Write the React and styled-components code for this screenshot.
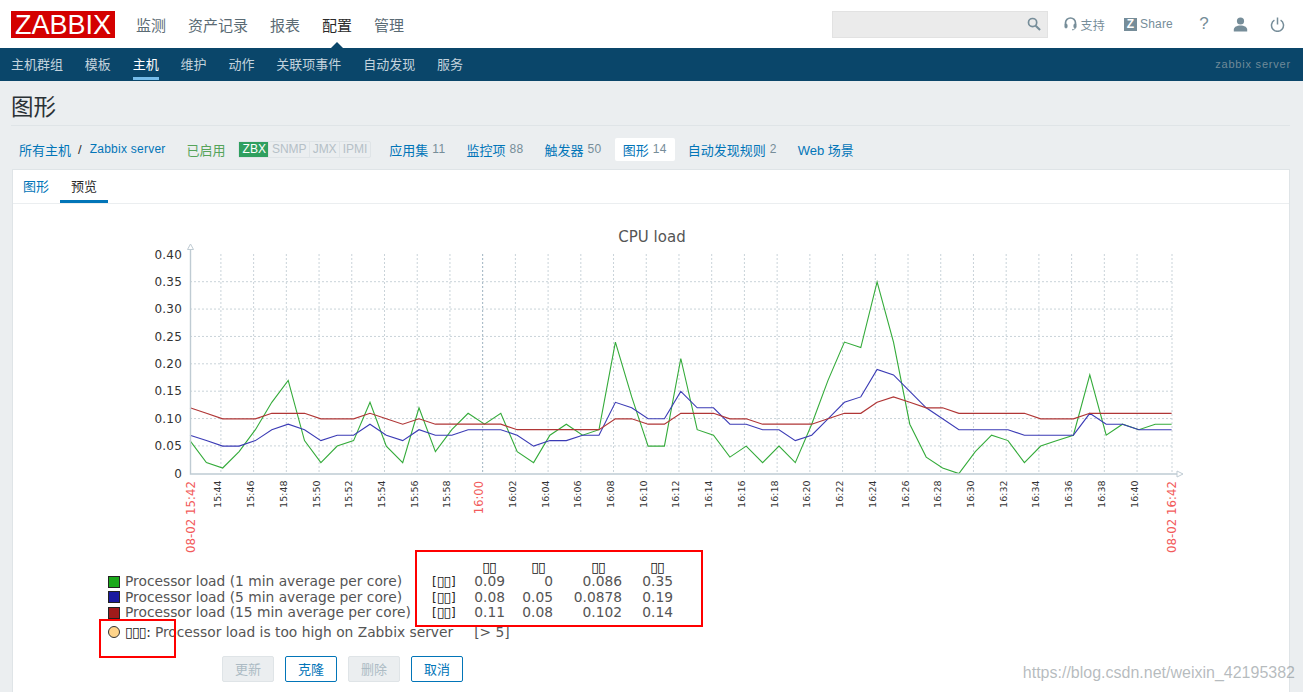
import React from "react"
import styled, { createGlobalStyle } from "styled-components"

const UI_FONT = `"Liberation Sans", "Noto Sans CJK SC", Arial, sans-serif`
const GRAPH_FONT = `"DejaVu Sans", sans-serif`

const GlobalStyle = createGlobalStyle`
html, body {
    margin: 0;
    padding: 0;
    background: #ebeef0;
    overflow: hidden;
}
`

const topMenu = ["监测", "资产记录", "报表", "配置", "管理"]
const subMenu = ["主机群组", "模板", "主机", "维护", "动作", "关联项事件", "自动发现", "服务"]
const hostLinks = [
    ["应用集", "11"],
    ["监控项", "88"],
    ["触发器", "50"],
    ["图形", "14", true],
    ["自动发现规则", "2"],
    ["Web 场景", ""],
]

const green = [.06, .02, .01, .04, .08, .13, .17, .06, .02, .05, .06, .13, .05, .02, .12, .04, .08, .11, .09, .11, .04, .02, .07, .09, .07, .08, .24, .14, .05, .05, .21, .08, .07, .03, .05, .02, .05, .02, .09, .17, .24, .23, .35, .24, .09, .03, .01, 0, .04, .07, .06, .02, .05, .06, .07, .18, .07, .09, .08, .09, .09]
const blue = [.07, .06, .05, .05, .06, .08, .09, .08, .06, .07, .07, .09, .07, .06, .08, .07, .07, .08, .08, .08, .07, .05, .06, .06, .07, .07, .13, .12, .10, .10, .15, .12, .12, .09, .09, .08, .08, .06, .07, .10, .13, .14, .19, .18, .15, .12, .10, .08, .08, .08, .08, .07, .07, .07, .07, .11, .09, .09, .08, .08, .08]
const red = [.12, .11, .10, .10, .10, .11, .11, .11, .10, .10, .10, .11, .10, .09, .10, .09, .09, .09, .09, .09, .08, .08, .08, .08, .08, .08, .10, .10, .09, .09, .11, .11, .11, .10, .10, .09, .09, .09, .09, .10, .11, .11, .13, .14, .13, .12, .12, .11, .11, .11, .11, .11, .10, .10, .10, .11, .11, .11, .11, .11, .11]

const CHART_X0 = 190
const CHART_STEP = 16.36
const CHART_Y0 = 473.5
const CHART_PER_UNIT = 547.5

const toPoints = (values) => values.map((v, i) => `${(CHART_X0 + i * CHART_STEP).toFixed(1)},${(CHART_Y0 - v * CHART_PER_UNIT).toFixed(1)}`).join(" ")

const yLabels = ["0.40", "0.35", "0.30", "0.25", "0.20", "0.15", "0.10", "0.05", "0"]

// 15:44 ... 16:40, every 2 minutes
const timeTicks = []
for (let i = 0; i <= 28; i++) {
    const minute = 44 + i * 2
    const h = minute >= 60 ? 16 : 15
    const m = minute >= 60 ? minute - 60 : minute
    timeTicks.push({ x: 220.9 + i * 32.72, label: `${h}:${String(m).padStart(2, "0")}`, major: m === 0 })
}

const legend = [
    { color: "#1aa81a", name: "Processor load (1 min average per core)", values: ["0.09", "0", "0.086", "0.35"] },
    { color: "#1a1aa0", name: "Processor load (5 min average per core)", values: ["0.08", "0.05", "0.0878", "0.19"] },
    { color: "#a01a1a", name: "Processor load (15 min average per core)", values: ["0.11", "0.08", "0.102", "0.14"] },
]

function Chart() {
    return (
        <ChartSvg viewBox="13 204 1277 350" width="1277" height="350">
            <text x="652" y="241.5" textAnchor="middle" fontSize="15" fill="#555">CPU load</text>

            {yLabels.slice(1, 8).map((_, i) => {
                const y = 281.7 + i * 27.37
                return <line key={i} x1="190" x2="1172" y1={y} y2={y} stroke="#c9d3d9" strokeDasharray="2 2" />
            })}
            {timeTicks.map((t) => (
                <line key={t.label} x1={t.x} x2={t.x} y1="254" y2="473" stroke={t.major ? "#9db2c0" : "#c9d3d9"} strokeDasharray="2 2" />
            ))}
            <line x1="1172" x2="1172" y1="254" y2="473" stroke="#c9d3d9" strokeDasharray="2 2" />

            <polyline points={toPoints(green)} fill="none" stroke="#34ab3a" strokeWidth="1.1" />
            <polyline points={toPoints(blue)} fill="none" stroke="#3b3bb5" strokeWidth="1.1" />
            <polyline points={toPoints(red)} fill="none" stroke="#b03636" strokeWidth="1.2" />

            <path d="M190.5 249V474H1178" fill="none" stroke="#bfcbd3" strokeWidth="1.4" />
            <path d="M190.5 244L193.5 249.5H187.5Z" fill="#fff" stroke="#bfcbd3" />
            <path d="M1183 474L1177 471V477Z" fill="#fff" stroke="#bfcbd3" />

            {yLabels.map((label, i) => (
                <text key={label} x="182" y={258.6 + i * 27.37} textAnchor="end" fontSize="12" letterSpacing="0.2" fill="#333">{label}</text>
            ))}
            {timeTicks.map((t) => (
                <text
                    key={t.label}
                    transform={`translate(${t.x + 0.5} ${t.major ? 481 : 480.5}) rotate(-90)`}
                    textAnchor="end"
                    fontSize={t.major ? 11.5 : 9.5}
                    fill={t.major ? "#f25b5b" : "#333"}
                >
                    {t.label}
                </text>
            ))}
            <text transform="translate(194.5 481) rotate(-90)" textAnchor="end" fontSize="11.8" fill="#f25b5b">08-02 15:42</text>
            <text transform="translate(1175.5 481) rotate(-90)" textAnchor="end" fontSize="11.8" fill="#f25b5b">08-02 16:42</text>
        </ChartSvg>
    )
}

export default function App() {
    return (
        <Page>
            <GlobalStyle />
            <Header>
                <Logo>ZABBIX</Logo>
                <TopMenu>
                    {topMenu.map((item) => (
                        <TopItem key={item} $active={item === "配置"}>{item}</TopItem>
                    ))}
                </TopMenu>
                <HeaderRight>
                    <SearchBox>
                        <svg width="14" height="14" viewBox="0 0 15 15" fill="none" stroke="#768d99" strokeWidth="1.8">
                            <circle cx="6" cy="6" r="4.4" />
                            <path d="M9.3 9.3L14 14" strokeWidth="2.2" />
                        </svg>
                    </SearchBox>
                    <HeaderLink $left={16}>
                        <svg width="13" height="14" viewBox="0 0 13 14" fill="none" stroke="#768d99" strokeWidth="1.7">
                            <path d="M1.5 8V6a5 5 0 0 1 10 0v2" />
                            <rect x="0.8" y="7" width="2.4" height="4" rx="1" fill="#768d99" strokeWidth="0.6" />
                            <rect x="9.8" y="7" width="2.4" height="4" rx="1" fill="#768d99" strokeWidth="0.6" />
                            <path d="M11 11c0 1.2-1 1.8-3 1.8" strokeWidth="1" />
                        </svg>
                        支持
                    </HeaderLink>
                    <HeaderLink $left={19}>
                        <ShareMark>Z</ShareMark>
                        Share
                    </HeaderLink>
                    <Help>?</Help>
                    <IconSlot $left={24}>
                        <svg width="15" height="15" viewBox="0 0 15 15" fill="#768d99">
                            <circle cx="7.5" cy="4" r="3.6" />
                            <path d="M0.8 14.5v-1.8c0-2.6 3-4.2 6.7-4.2s6.7 1.6 6.7 4.2v1.8z" />
                        </svg>
                    </IconSlot>
                    <IconSlot $left={22}>
                        <svg width="15" height="15" viewBox="0 0 15 15" fill="none" stroke="#768d99" strokeWidth="1.5">
                            <path d="M4.4 3.2a6 6 0 1 0 6.2 0" />
                            <path d="M7.5 0.5v7" />
                        </svg>
                    </IconSlot>
                </HeaderRight>
            </Header>

            <SubNav>
                {subMenu.map((item) => (
                    <SubItem key={item} $active={item === "主机"}>{item}</SubItem>
                ))}
                <ServerName>zabbix server</ServerName>
            </SubNav>

            <TitleBar>图形</TitleBar>

            <HostBar>
                <HostLink>所有主机</HostLink>
                <Slash>/</Slash>
                <ServerLink>Zabbix server</ServerLink>
                <Enabled>已启用</Enabled>
                <Badges>
                    <Badge $on>ZBX</Badge>
                    <Badge>SNMP</Badge>
                    <Badge>JMX</Badge>
                    <Badge>IPMI</Badge>
                </Badges>
                <HostTabs>
                    {hostLinks.map(([name, count, active]) => (
                        <HostTab key={name} $active={active}>
                            <HostLink>{name}</HostLink>
                            {count && <Count>{count}</Count>}
                        </HostTab>
                    ))}
                </HostTabs>
            </HostBar>

            <Panel>
                <PanelTabs>
                    <PanelTab>图形</PanelTab>
                    <PanelTab $active>预览</PanelTab>
                </PanelTabs>

                <Chart />

                <LegendGrid>
                    <span />
                    <span />
                    <HeadCell $inset={9}>▯▯</HeadCell>
                    <HeadCell $inset={8}>▯▯</HeadCell>
                    <HeadCell $inset={17}>▯▯</HeadCell>
                    <HeadCell $inset={9}>▯▯</HeadCell>
                    {legend.map((row) => (
                        <React.Fragment key={row.name}>
                            <LegendName>
                                <Swatch $color={row.color} />
                                {row.name}
                            </LegendName>
                            <StatLabel>[<Tofu>▯▯</Tofu>]</StatLabel>
                            {row.values.map((v, i) => (
                                <StatCell key={i}>{v}</StatCell>
                            ))}
                        </React.Fragment>
                    ))}
                </LegendGrid>

                <TriggerRow>
                    <TriggerDot />
                    <TriggerLabel><Tofu>▯▯▯</Tofu>:</TriggerLabel>
                    <TriggerName>Processor load is too high on Zabbix server</TriggerName>
                    <span>[&gt; 5]</span>
                </TriggerRow>

                <Buttons>
                    <ActionButton disabled>更新</ActionButton>
                    <ActionButton>克隆</ActionButton>
                    <ActionButton disabled>删除</ActionButton>
                    <ActionButton>取消</ActionButton>
                </Buttons>
            </Panel>

            <StatBoxMark />
            <TriggerMark />
            <Watermark>https://blog.csdn.net/weixin_42195382</Watermark>
        </Page>
    )
}

const Page = styled.div`
position: relative;
width: 1303px;
height: 692px;
overflow: hidden;
background: #ebeef0;
font-family: ${UI_FONT};
font-size: 13px;
`
const Header = styled.div`
display: flex;
align-items: center;
height: 48px;
padding: 0 18px 0 11px;
box-sizing: border-box;
background: white;
`
const Logo = styled.div`
width: 104px;
height: 27px;
line-height: 28px;
margin-right: 21px;
background: #d40000;
color: white;
font-size: 27px;
text-align: center;
`
const TopMenu = styled.div`
display: flex;
gap: 22px;
`
const TopItem = styled.div`
position: relative;
font-size: 15px;
color: ${(props) => (props.$active ? "#2b2b2b" : "#5b6b74")};
&::after {
    content: "";
    display: ${(props) => (props.$active ? "block" : "none")};
    position: absolute;
    left: 50%;
    bottom: -15px;
    margin-left: -8px;
    border-left: 8px solid transparent;
    border-right: 8px solid transparent;
    border-bottom: 8px solid #0a466a;
}
`
const HeaderRight = styled.div`
display: flex;
align-items: center;
margin-left: auto;
color: #768d99;
`
const SearchBox = styled.div`
display: flex;
align-items: center;
justify-content: flex-end;
width: 216px;
height: 27px;
padding-right: 6px;
box-sizing: border-box;
background: #ebebeb;
border: 1px solid #e2e2e2;
`
const HeaderLink = styled.div`
display: flex;
align-items: center;
gap: 4px;
margin-left: ${(props) => props.$left}px;
font-size: 12px;
letter-spacing: 0.2px;
`
const ShareMark = styled.span`
display: block;
width: 13px;
height: 13px;
margin-right: -1px;
line-height: 13px;
background: #768d99;
color: white;
font-size: 12px;
font-weight: bold;
text-align: center;
`
const Help = styled.div`
margin-left: 26px;
width: 10px;
font-size: 17px;
text-align: center;
`
const IconSlot = styled.div`
display: flex;
margin-left: ${(props) => props.$left}px;
`
const SubNav = styled.div`
display: flex;
align-items: stretch;
gap: 21.85px;
height: 33px;
padding: 0 12px 0 11px;
box-sizing: border-box;
background: #0a466a;
`
const SubItem = styled.div`
height: 32px;
line-height: 33px;
box-sizing: border-box;
font-size: 13px;
color: ${(props) => (props.$active ? "white" : "#c3d3dd")};
border-bottom: 3px solid ${(props) => (props.$active ? "#76bdea" : "transparent")};
`
const ServerName = styled.div`
margin-left: auto;
line-height: 33px;
font-size: 11px;
letter-spacing: 0.8px;
color: #6f8a99;
`
const TitleBar = styled.div`
height: 45px;
line-height: 53px;
margin: 0 13px 0 11px;
box-sizing: border-box;
border-bottom: 1px solid #dfe4e7;
font-size: 22.5px;
color: #2b3236;
`
const HostBar = styled.div`
display: flex;
align-items: center;
height: 43px;
padding: 3px 0 0 19px;
box-sizing: border-box;
font-size: 13px;
`
const HostLink = styled.span`
color: #0275b8;
`
const Slash = styled.span`
margin: 0 8px 0 7px;
color: #2b2b2b;
`
const ServerLink = styled.span`
font-size: 12px;
letter-spacing: 0.25px;
color: #0275b8;
`
const Enabled = styled.span`
margin-left: 21px;
color: #55a35a;
`
const Badges = styled.div`
display: flex;
margin-left: 12px;
height: 17px;
border: 1px solid #dfe4e7;
border-radius: 2px;
box-sizing: border-box;
`
const Badge = styled.span`
padding: 0 2.5px 0 ${(props) => (props.$on ? "3px" : "2.5px")};
line-height: 15px;
font-size: 12px;
border-left: 1px solid ${(props) => (props.$on ? "transparent" : "#dfe4e7")};
color: ${(props) => (props.$on ? "white" : "#b5c0c7")};
background: ${(props) => (props.$on ? "#2f9f5f" : "transparent")};
`
const HostTabs = styled.div`
display: flex;
align-items: center;
margin-left: 8px;
`
const HostTab = styled.div`
display: flex;
align-items: center;
gap: 4px;
height: 23px;
padding: 0 8px;
margin: 0 2.5px;
background: ${(props) => (props.$active ? "white" : "transparent")};
border-radius: 2px;
`
const Count = styled.span`
font-size: 12px;
letter-spacing: 0.35px;
color: #768d99;
`
const Panel = styled.div`
margin: 0 13px 0 12px;
height: 531px;
box-sizing: border-box;
background: white;
border: 1px solid #dfe4e7;
border-bottom: none;
`
const PanelTabs = styled.div`
display: flex;
gap: 1px;
height: 34px;
box-sizing: border-box;
border-bottom: 1px solid #ebeef0;
`
const PanelTab = styled.div`
width: ${(props) => (props.$active ? "48px" : "46px")};
height: 33px;
box-sizing: border-box;
line-height: 33px;
text-align: center;
font-size: 13px;
color: ${(props) => (props.$active ? "#2b2b2b" : "#0275b8")};
border-bottom: 3px solid ${(props) => (props.$active ? "#0275b8" : "transparent")};
`
const ChartSvg = styled.svg`
display: block;
font-family: ${GRAPH_FONT};
`
const LegendGrid = styled.div`
display: grid;
grid-template-columns: 324px 41px 32px 48px 69px 51px;
grid-template-rows: 14.4px repeat(3, 15.4px);
margin: 6px 0 0 95px;
font-family: ${GRAPH_FONT};
font-size: 13.8px;
line-height: 15.4px;
color: #555;
white-space: nowrap;
`
const Tofu = styled.span`
font-size: 14px;
letter-spacing: -0.8px;
margin-right: 0.5px;
color: #222;
`
const HeadCell = styled(Tofu).attrs({ as: "div" })`
text-align: right;
margin-right: 0;
padding-right: ${(props) => props.$inset}px;
color: #111;
`
const LegendName = styled.div`
display: flex;
align-items: center;
gap: 5px;
`
const Swatch = styled.span`
width: 10px;
height: 10px;
flex: none;
background: ${(props) => props.$color};
border: 1px solid #222;
`
const StatLabel = styled.div`
font-size: 12px;
color: #222;
`
const StatCell = styled.div`
text-align: right;
`
const TriggerRow = styled.div`
display: flex;
align-items: center;
margin: 3px 0 0 95px;
height: 16px;
font-family: ${GRAPH_FONT};
font-size: 13.8px;
color: #555;
white-space: nowrap;
`
const TriggerLabel = styled.span`
margin: 0 4px 0 5px;
color: #222;
`
const TriggerDot = styled.span`
width: 10px;
height: 10px;
flex: none;
border-radius: 50%;
background: #ffd48a;
border: 1px solid #333;
`
const TriggerName = styled.span`
margin-right: 21px;
`
const Buttons = styled.div`
display: flex;
gap: 11px;
margin: 16px 0 0 209px;
`
const ActionButton = styled.button`
width: 52px;
height: 26px;
padding: 0;
box-sizing: border-box;
font-family: ${UI_FONT};
font-size: 13px;
border-radius: 2px;
border: 1px solid ${(props) => (props.disabled ? "#dfe4e7" : "#0275b8")};
background: ${(props) => (props.disabled ? "#ebeef0" : "white")};
color: ${(props) => (props.disabled ? "#acbbc4" : "#0275b8")};
`
const StatBoxMark = styled.div`
position: absolute;
left: 415px;
top: 550px;
width: 288px;
height: 77px;
box-sizing: border-box;
border: 2px solid #f00;
pointer-events: none;
`
const TriggerMark = styled.div`
position: absolute;
left: 99px;
top: 619px;
width: 77px;
height: 39px;
box-sizing: border-box;
border: 2px solid #f00;
pointer-events: none;
`
const Watermark = styled.div`
position: absolute;
right: 8px;
top: 664px;
font-size: 16px;
color: rgba(110, 120, 125, 0.5);
`
